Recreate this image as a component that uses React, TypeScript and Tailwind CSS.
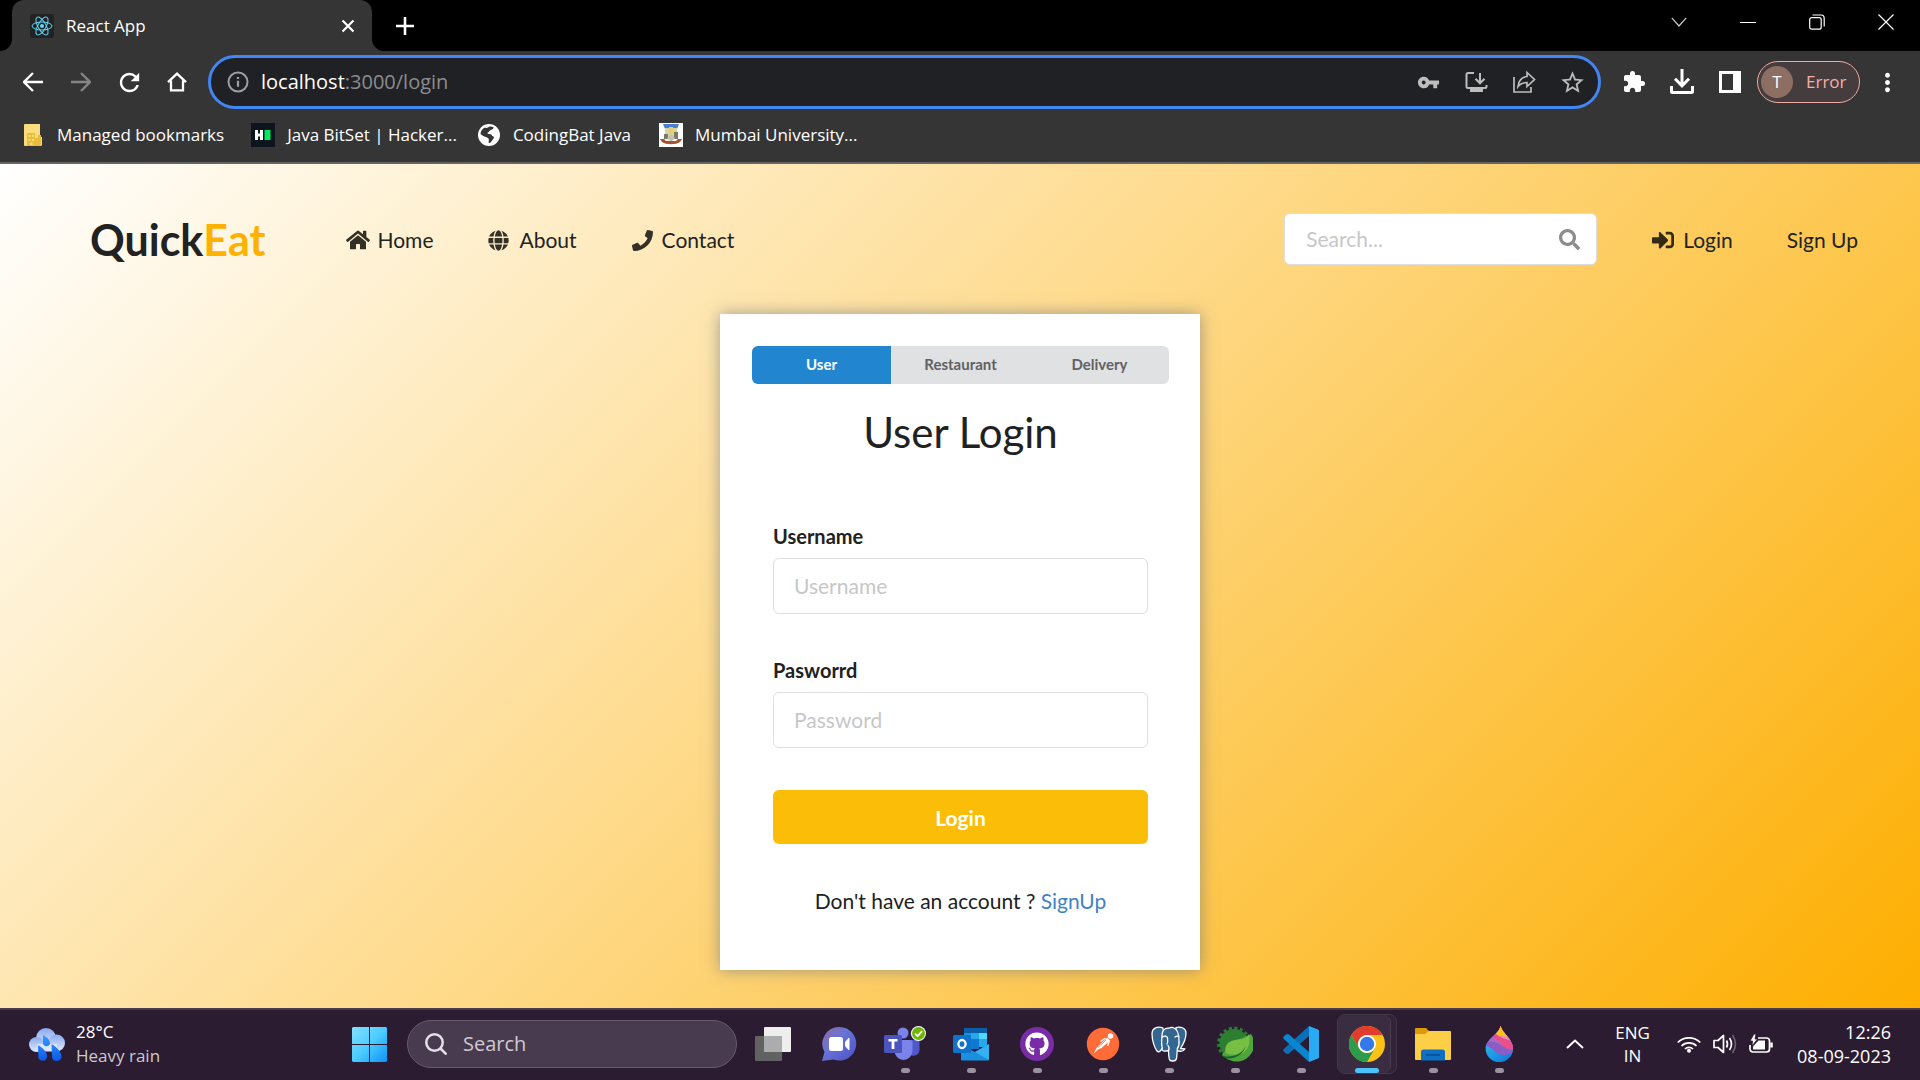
import type { ReactNode } from "react";
import { FaHome, FaGlobe, FaPhone, FaSearch, FaSignInAlt, FaGithub } from "react-icons/fa";
import { MdVpnKey, MdStarOutline, MdExtension, MdMoreVert, MdRefresh } from "react-icons/md";

function ReactLogo() {
  return (
    <svg viewBox="0 0 24 24" className="size-6 shrink-0">
      <rect width="24" height="24" rx="2" fill="#222" />
      <g fill="none" stroke="#61dafb" strokeWidth="1">
        <ellipse cx="12" cy="12" rx="10" ry="4" />
        <ellipse cx="12" cy="12" rx="10" ry="4" transform="rotate(60 12 12)" />
        <ellipse cx="12" cy="12" rx="10" ry="4" transform="rotate(120 12 12)" />
      </g>
      <circle cx="12" cy="12" r="2" fill="#61dafb" />
    </svg>
  );
}

function TabStrip() {
  return (
    <header className="flex h-[51px] items-stretch bg-black text-white">
      <svg viewBox="0 0 12 12" className="size-3 shrink-0 self-end">
        <path d="M12 0v12H0A12 12 0 0 0 12 0z" fill="#353535" />
      </svg>
      <div className="flex w-[360px] items-center rounded-t-xl bg-[#353535] pr-3 pl-[18px]">
        <ReactLogo />
        <span className="ml-3 flex-1 text-[17px]">React App</span>
        <button aria-label="Close tab" className="flex size-6 items-center justify-center">
          <svg viewBox="0 0 14 14" className="size-[14px]" stroke="#fff" strokeWidth="2.2">
            <path d="M1.5 1.5l11 11M12.5 1.5l-11 11" />
          </svg>
        </button>
      </div>
      <svg viewBox="0 0 12 12" className="size-3 shrink-0 self-end">
        <path d="M0 0v12h12A12 12 0 0 1 0 0z" fill="#353535" />
      </svg>
      <button aria-label="New tab" className="ml-2 flex w-[26px] items-center justify-center">
        <svg viewBox="0 0 18 18" className="size-[18px]" stroke="#fff" strokeWidth="2.6">
          <path d="M9 0v18M0 9h18" />
        </svg>
      </button>
      <div className="ml-auto flex h-11 items-center">
        <button aria-label="Search tabs" className="flex w-[68px] justify-center">
          <svg viewBox="0 0 16 10" className="h-[10px] w-4" fill="none" stroke="#ccc" strokeWidth="1.2">
            <path d="M.8.8L8 9 15.200.8" />
          </svg>
        </button>
        <button aria-label="Minimize" className="flex w-[69px] justify-center">
          <span className="h-px w-4 bg-white" />
        </button>
        <button aria-label="Restore" className="flex w-[69px] justify-center">
          <svg viewBox="0 0 16 16" className="size-4" fill="none" stroke="#fff" strokeWidth="1.2">
            <rect x=".7" y="3.700" width="11.500" height="11.500" rx="2" />
            <path d="M3.500 1h8.500a3 3 0 0 1 3.200 3v8.500" />
          </svg>
        </button>
        <button aria-label="Close window" className="flex w-[69px] justify-center">
          <svg viewBox="0 0 16 16" className="size-4" stroke="#fff" strokeWidth="1.2">
            <path d="M.5.5l15 15M15.500.5l-15 15" />
          </svg>
        </button>
      </div>
    </header>
  );
}

function ToolButton({ label, children }: { label: string; children: ReactNode }) {
  return (
    <button aria-label={label} className="flex h-12 w-12 items-center justify-center">
      {children}
    </button>
  );
}

function Toolbar() {
  return (
    <div className="flex h-[62px] items-center bg-[#353535] pr-[17px] pl-[9px] text-white">
      <ToolButton label="Back">
        <svg viewBox="0 0 20 20" className="size-5" fill="none" stroke="#fff" strokeWidth="2.300">
          <path d="M20 10H2M10 1l-9 9 9 9" />
        </svg>
      </ToolButton>
      <ToolButton label="Forward">
        <svg viewBox="0 0 20 20" className="size-5" fill="none" stroke="#868686" strokeWidth="2.300">
          <path d="M0 10h18M10 1l9 9-9 9" />
        </svg>
      </ToolButton>
      <ToolButton label="Reload">
        <MdRefresh className="size-[29px]" />
      </ToolButton>
      <ToolButton label="Home">
        <svg viewBox="0 0 20 20" className="size-5" fill="none" stroke="#fff" strokeWidth="2.300">
          <path d="M1 10.200L10 1.600l9 8.600M4 8.500v9.800h12V8.500" />
        </svg>
      </ToolButton>
      <div className="ml-[7px] flex h-[54px] flex-1 items-center rounded-full border-3 border-[#4285f4] bg-[#202124] pr-[2px] pl-4 text-[#bdbdbd]">
        <svg viewBox="0 0 22 22" className="size-[22px] shrink-0" fill="none" stroke="#9aa0a6" strokeWidth="2">
          <circle cx="11" cy="11" r="9.500" />
          <path d="M11 9.800v6M11 6v2" strokeWidth="2.200" />
        </svg>
        <p className="ml-3 flex-1 text-[20px] text-[#8b8d90]">
          <span className="text-white">localhost</span>:3000/login
        </p>
        <ToolButton label="Passwords">
          <MdVpnKey className="size-[23px]" />
        </ToolButton>
        <ToolButton label="Install app">
          <svg viewBox="0 0 24 24" className="size-6" fill="none" stroke="currentColor" strokeWidth="2">
            <path d="M10 3H4a1.500 1.500 0 0 0-1.500 1.500v12A1.500 1.500 0 0 0 4 18h17a1.500 1.500 0 0 0 1.500-1.500V15" />
            <path d="M16 3v10M11.500 8.800l4.500 4.500 4.500-4.500" />
            <path d="M6 19h13v3H6z" fill="currentColor" stroke="none" />
          </svg>
        </ToolButton>
        <ToolButton label="Share">
          <svg viewBox="0 0 24 24" className="size-6" fill="none" stroke="currentColor" strokeWidth="1.700">
            <path d="M2 7v15h17v-5" />
            <path d="M15 2.500l7.500 7L15 16.500v-4c-4 0-6.500.8-9 4 .6-5.500 3.500-9.300 9-10z" />
          </svg>
        </ToolButton>
        <ToolButton label="Bookmark this tab">
          <MdStarOutline className="size-[27px]" />
        </ToolButton>
      </div>
      <div className="ml-[9px] flex items-center">
        <ToolButton label="Extensions">
          <MdExtension className="size-6" />
        </ToolButton>
        <ToolButton label="Downloads">
          <svg viewBox="0 0 24 26" className="h-[26px] w-6" fill="none" stroke="#fff" strokeWidth="3">
            <path d="M12 0v16M5 9.800l7 7 7-7" />
            <path d="M1.500 17v5.500a1 1 0 0 0 1 1h19a1 1 0 0 0 1-1V17" />
          </svg>
        </ToolButton>
        <ToolButton label="Side panel">
          <svg viewBox="0 0 22 22" className="size-[22px]">
            <path d="M0 0h22v22H0zM3 3v16h11V3z" fill="#fff" fillRule="evenodd" />
          </svg>
        </ToolButton>
      </div>
      <button className="ml-[3px] flex h-[42px] w-[103px] items-center rounded-full border border-[#f2a9a2] bg-[#453d3d] pl-[3px] text-[17px] text-[#f6aea5]">
        <span className="flex size-8 items-center justify-center rounded-full bg-[#8d6e63] text-white">T</span>
        <span className="ml-[13px]">Error</span>
      </button>
      <button aria-label="Menu" className="ml-[11px] flex w-8 justify-center">
        <MdMoreVert className="size-[29px]" />
      </button>
    </div>
  );
}

function Bookmarks() {
  return (
    <nav className="flex h-[51px] items-center border-b-2 border-[#656565] bg-[#353535] pb-[6px] pl-6 text-[17px] text-white">
      <a href="#managed" className="flex items-center gap-[15px]">
        <svg viewBox="0 0 18 22" className="h-[22px] w-[18px]">
          <path d="M1 0h15v13h2v7.500A1.500 1.500 0 0 1 16.500 22H1a1 1 0 0 1-1-1V1a1 1 0 0 1 1-1z" fill="#fbdc7c" />
          <path d="M3 9h8v5h3v-3h3v9.500a1.500 1.500 0 0 1-1.500 1.500H3z" fill="#e9bd3c" />
          <path d="M4.500 11h2v2h-2zM8 11h2v2H8zM4.500 15h2v2h-2zM8 15h2v2H8zM6 18.500h2.500V21H6z" fill="#fbdc7c" />
        </svg>
        Managed bookmarks
      </a>
      <a href="#bitset" className="ml-[27px] flex items-center gap-3">
        <svg viewBox="0 0 24 24" className="size-6">
          <rect width="24" height="24" fill="#0e141e" />
          <path d="M4 7h3v3.500h2V7h3v10H9v-3.500H7V17H4z" fill="#fff" />
          <path d="M13.500 7h6v10h-6z" fill="#00ea64" />
        </svg>
        Java BitSet | Hacker...
      </a>
      <a href="#codingbat" className="ml-[21px] flex items-center gap-[13px]">
        <svg viewBox="0 0 22 22" className="size-[22px]">
          <circle cx="11" cy="11" r="11" fill="#fff" />
          <path d="M15.500 3.200c.3 2-2 2.300-3.500 3.200-1.300.9-.9 1.800-2.300 2.100-.8 1.500 1 1.500 3 1.700 1.200.2.800 1.800 2.300 2 1.500.3 1 2.300-.2 3.200-1.200.9-1.300 3.300-3.800 3.600-1-1 .3-2.700-.2-4-.6-1.600-3.600-2-5-2.800C4 11.200 2.500 10 2.500 10c.2-3.500 2-5.300 4.500-6.600C8.500 5 10 3.200 11.500 2.600c1.500-.3 3 0 4 .6z" fill="#353535" />
        </svg>
        CodingBat Java
      </a>
      <a href="#mumbai" className="ml-[28px] flex items-center gap-3">
        <svg viewBox="0 0 24 24" className="size-6">
          <rect width="24" height="24" fill="#fff" />
          <path d="M4 1h16l-2 5H6z" fill="#4b7fd0" />
          <path d="M6 5h12v11H6z" fill="#d8d3a4" />
          <path d="M10 4h4v7h-4z" fill="#e6cf6a" />
          <path d="M5 11h4v5H5zM15 9h4v7h-4z" fill="#7a7a62" />
          <path d="M8 15l4-4 4 4-4 4z" fill="#c4c1b4" />
          <path d="M1 16h4l2 2h10l2-2h4l-2 3c-4 3-14 3-18 0z" fill="#a8502f" />
        </svg>
        Mumbai University...
      </a>
    </nav>
  );
}

function SiteHeader() {
  return (
    <div className="flex h-[150px] items-center pr-[62px] pl-[90px] text-[21px] text-[#222]">
      <a href="#top" className="text-[43px] leading-none font-bold">
        Quick<span className="text-[#ffb100]">Eat</span>
      </a>
      <nav className="ml-20 flex items-center gap-[55px] pt-[2px]">
        <a href="#home" className="flex items-center gap-2">
          <FaHome className="size-6 text-[#333026]" />
          Home
        </a>
        <a href="#about" className="flex items-center gap-[10px]">
          <FaGlobe className="size-[21px] text-[#333026]" />
          About
        </a>
        <a href="#contact" className="flex items-center gap-[9px]">
          <FaPhone className="size-[21px] text-[#333026]" />
          Contact
        </a>
      </nav>
      <label className="ml-auto flex h-[52px] w-[313px] items-center rounded-md border border-[#dedede] bg-white px-[21px] pr-4">
        <input type="search" placeholder="Search..." aria-label="Search" className="min-w-0 flex-1 outline-none placeholder:text-[#c7c7c7]" />
        <FaSearch className="size-[21px] text-[#8c8c8c]" />
      </label>
      <a href="#login" className="ml-[55px] flex items-center gap-[9px] pt-[2px]">
        <FaSignInAlt className="size-[22px] text-[#332a17]" />
        Login
      </a>
      <a href="#signup" className="ml-[54px] pt-[2px]">
        Sign Up
      </a>
    </div>
  );
}

function Field({ id, label, placeholder, type }: { id: string; label: string; placeholder: string; type: string }) {
  return (
    <div className="flex flex-col">
      <label htmlFor={id} className="mb-2 text-[20px] leading-7 font-bold text-[#212121]">
        {label}
      </label>
      <input
        id={id}
        type={type}
        placeholder={placeholder}
        className="h-14 rounded-md border border-[#dedede] px-5 pb-[2px] text-[21px] outline-none placeholder:text-[#c7c7c7]"
      />
    </div>
  );
}

function LoginCard() {
  return (
    <section className="mx-auto mb-[38px] flex w-[480px] flex-col bg-white pt-8 pr-[31px] pb-[54px] pl-8 shadow-[0_0_15px_rgba(128,128,128,0.75)]">
      <div className="grid h-[38px] grid-cols-3 overflow-hidden rounded-md bg-[#e0e1e2] text-[15px] font-bold text-[#606162]">
        <button className="bg-[#2185d0] pb-[2px] text-white">User</button>
        <button className="pb-[2px]">Restaurant</button>
        <button className="pb-[2px]">Delivery</button>
      </div>
      <h1 className="mt-5 text-center text-[42px] leading-[56px] text-[#212121]">User Login</h1>
      <form className="mx-[21px] mt-[62px] flex flex-col gap-[42px]">
        <Field id="username" label="Username" placeholder="Username" type="text" />
        <Field id="password" label="Pasworrd" placeholder="Password" type="password" />
        <button type="button" className="h-[54px] rounded-md bg-[#fbbd08] pt-[2px] text-[21px] font-bold text-white">
          Login
        </button>
      </form>
      <p className="mt-[42px] text-center text-[21px] leading-[30px] text-[#212121]">
        Don't have an account ?{" "}
        <a href="#signup" className="text-[#4183c4]">
          SignUp
        </a>
      </p>
    </section>
  );
}

function Weather() {
  return (
    <svg viewBox="0 0 36 36" className="size-9 shrink-0">
      <defs>
        <linearGradient id="cloud" x1="0" y1="0" x2="0" y2="1">
          <stop offset="0" stopColor="#8aa9ee" />
          <stop offset="1" stopColor="#e1ebfd" />
        </linearGradient>
        <linearGradient id="drop" x1="0" y1="0" x2="0" y2="1">
          <stop offset="0" stopColor="#3a9cff" />
          <stop offset="1" stopColor="#0a57e8" />
        </linearGradient>
      </defs>
      <circle cx="17" cy="12" r="10" fill="url(#cloud)" />
      <circle cx="7.500" cy="18.500" r="7.500" fill="url(#cloud)" />
      <circle cx="27.500" cy="17" r="8.500" fill="url(#cloud)" />
      <path d="M8 18h20v7.500H8z" fill="#dbe7fd" />
      <path d="M14 9c4.500 2.500 7 5 7 8.500a3.600 3.600 0 0 1-7 0zM9 19c6 4 9 7 9 11.500a4.300 4.300 0 0 1-8.700 0zM22.500 18c6.500 4 10 8.500 10 13a4.800 4.800 0 0 1-9.500 0z" fill="url(#drop)" />
    </svg>
  );
}

function WindowsLogo() {
  return (
    <svg viewBox="0 0 35 35" className="size-[35px]">
      <defs>
        <linearGradient id="win" x1="0" y1="0" x2="35" y2="35" gradientUnits="userSpaceOnUse">
          <stop offset="0" stopColor="#83e0ff" />
          <stop offset=".5" stopColor="#4cccff" />
          <stop offset="1" stopColor="#0c93f5" />
        </linearGradient>
      </defs>
      <path d="M1 0h16v17H0V1zM18 0h16l1 1v16H18zM0 18h17v17H1l-1-1zM18 18h17v16l-1 1H18z" fill="url(#win)" />
    </svg>
  );
}

const icon = "size-9";

const TaskViewIcon = () => (
  <svg viewBox="0 0 36 36" className={icon}>
    <rect x="9" y="1" width="27" height="25" rx="1" fill="#eee" />
    <rect y="10" width="27" height="25" rx="1" fill="#626262" />
    <path d="M9 10h18v16H9z" fill="#acacac" />
  </svg>
);

const ChatIcon = () => (
  <svg viewBox="0 0 36 36" className={icon}>
    <defs>
      <linearGradient id="chat" x1="0" y1="0" x2="1" y2="1">
        <stop offset="0" stopColor="#97659f" />
        <stop offset=".4" stopColor="#6975d6" />
        <stop offset="1" stopColor="#4c50c8" />
      </linearGradient>
    </defs>
    <path d="M18.500 1a16.800 16.800 0 1 1-6 32.500L1 35l2.500-9A16.800 16.800 0 0 1 18.500 1z" fill="url(#chat)" />
    <rect x="8" y="11" width="14" height="14" rx="2.500" fill="#fff" />
    <path d="M24 16l3.500-4h1v12h-1L24 20z" fill="#fff" />
  </svg>
);

const TeamsIcon = () => (
  <svg viewBox="0 0 42 36" className="h-9 w-[42px]">
    <circle cx="19" cy="7" r="5.500" fill="#7b83eb" />
    <circle cx="31" cy="8" r="4.500" fill="#5059c9" />
    <path d="M25 14h9a1.500 1.500 0 0 1 1.500 1.500V24a6 6 0 0 1-9 5z" fill="#5059c9" />
    <path d="M10 14h16.500a2 2 0 0 1 2 2v9a9 9 0 0 1-18 0z" fill="#7b83eb" />
    <rect y="9" width="18" height="18" rx="1.500" fill="#4b53bc" />
    <path d="M4.500 13h9v2.500h-3.100V23H7.600v-7.500H4.500z" fill="#fff" />
    <circle cx="34.500" cy="7.500" r="7.500" fill="#fff" />
    <circle cx="34.500" cy="7.500" r="6.500" fill="#6bb700" />
    <path d="M31 7.500l2.500 2.700 4.600-5" fill="none" stroke="#fff" strokeWidth="1.800" />
  </svg>
);

const OutlookIcon = () => (
  <svg viewBox="0 0 36 36" className={icon}>
    <path d="M11 2h23v16H11z" fill="#1490df" />
    <path d="M11 2h23v5H11z" fill="#0a5ea8" />
    <path d="M26 7h8v6h-8z" fill="#50d9ff" />
    <path d="M18 7h8v6h-8z" fill="#28a8ea" />
    <path d="M18 13h8v10h-8z" fill="#0f78d0" />
    <path d="M26 13h8v8h-8z" fill="#28a8ea" />
    <path d="M8 19l14 7 14-8v15.500a1 1 0 0 1-1 1H9a1 1 0 0 1-1-1z" fill="#1b8fdf" />
    <path d="M22 26l14-8v16z" fill="#35b0f0" />
    <rect y="9" width="18" height="18" rx="1.500" fill="#0f73cc" />
    <ellipse cx="9" cy="18" rx="3.600" ry="4" fill="none" stroke="#fff" strokeWidth="2.300" />
  </svg>
);

const GithubIcon = () => (
  <span className="flex size-[34px] items-center justify-center rounded-full bg-[#7a2ba6]">
    <FaGithub className="size-6 text-white" />
  </span>
);

const PostmanIcon = () => (
  <svg viewBox="0 0 36 36" className={icon}>
    <circle cx="18" cy="18" r="16.200" fill="#ff6c37" />
    <circle cx="25.500" cy="10" r="2.700" fill="#fff" />
    <path d="M22.500 11.500l2.500 3-8.500 7.500-3.500 1.500-4.500 4.300 3.300-6.300 3.500-3.500z" fill="#fff" />
    <path d="M24.500 14.500l-2 5.500M15.500 15.500l5-3.500" stroke="#fff" strokeWidth="1.300" />
    <path d="M13 21.500l8-7.500" stroke="#ff6c37" strokeWidth=".8" />
  </svg>
);

const PostgresIcon = () => (
  <svg viewBox="0 0 36 36" className={icon} fill="#336791" stroke="#fff" strokeWidth="1.300" strokeLinejoin="round" strokeLinecap="round">
    <path d="M25 1.500c5-1.500 10 1 10 5.500 0 5-2.500 11-5.500 15.500l4.500.3c-1.200 2.200-4.200 2.800-6.500 2.200-2 .2-3-1-3-2.500z" />
    <path d="M12 2C7 0 1 1.500 1 8c0 6 2.500 14 5 17 1.500 1.500 3 .5 4.500-1.500l3-4z" />
    <path d="M18 2.200C13.500 1.500 11 5 11 9c0 4-1 8 0 11.500 1 3-1.500 3.500 1.500 4.500 2 .6 4.500-.5 5-.5 0 3 .3 6 .8 8.500.7 2.800 6.500 2.700 7.200-.5.6-3 .5-7 .8-10 2-2.500 2-5 1.700-8C28 8 27 3 22 1.500c-1.500-.4-3 0-4 .7z" />
    <path d="M17.500 24.500c1-1.500.5-3.500-.5-5M11.500 11c2-1.500 4.500-1 5 1 .3 2 .7 4-.5 6M24 11c1.500-1.200 3-1 4-.3" fill="none" />
  </svg>
);

const SpringIcon = () => (
  <svg viewBox="0 0 36 36" className={icon}>
    <circle cx="17" cy="17.500" r="14.500" fill="#2d7d32" />
    <circle cx="17" cy="17.500" r="15.200" fill="none" stroke="#2d7d32" strokeWidth="3.500" strokeDasharray="3 2.500" />
    <path d="M34 8a17 17 0 1 1-29 20L20 14z" fill="#4da53c" />
    <path d="M8.500 27C7 16 15 14 22 13.500c5-.4 8-2 10-5.500 2 11-2 20-12 20.500-4 .2-8 .3-11.500-1.500z" fill="#77c043" />
    <path d="M6 30c10 2 19-2 23-10-3 9-12 14-21 12z" fill="#17652a" />
  </svg>
);

const VsCodeIcon = () => (
  <svg viewBox="0 0 36 36" className={icon}>
    <path d="M26 0v10L6 27.500q-1.500 1-3 0L.8 25.500q-1.200-1.300 0-2.600z" fill="#0b6fb8" />
    <path d="M26 36V26L6 8.500q-1.500-1-3 0L.8 10.500q-1.200 1.300 0 2.600z" fill="#0a86d1" />
    <path d="M26 0l9 3.500q1 .5 1 1.500v26q0 1-1 1.500L26 36z" fill="#2aaaf2" />
  </svg>
);

const ChromeIcon = () => (
  <svg viewBox="0 0 36 36" className={icon}>
    <circle cx="18" cy="18" r="18" fill="#fbc116" />
    <path d="M2.400 9A18 18 0 0 1 33.600 9H18a9 9 0 0 0-7.800 13.500z" fill="#e33b2e" />
    <path d="M2.400 9A18 18 0 0 0 18 36l7.800-13.500a9 9 0 0 1-15.600 0z" fill="#2a9c4b" />
    <circle cx="18" cy="18" r="9" fill="#fff" />
    <circle cx="18" cy="18" r="7.200" fill="#3478e8" />
  </svg>
);

const ExplorerIcon = () => (
  <svg viewBox="0 0 36 36" className={icon}>
    <path d="M0 3a1 1 0 0 1 1-1h10l4 4v6H0z" fill="#dd9a06" />
    <path d="M0 8h10l4-3h21a1 1 0 0 1 1 1v27a1 1 0 0 1-1 1H1a1 1 0 0 1-1-1z" fill="#fdcf47" />
    <path d="M6 34.500V26a2.500 2.500 0 0 1 2.500-2.500h19A2.500 2.500 0 0 1 30 26v8.500z" fill="#0f6fc2" />
    <path d="M11 29h14" stroke="#084b8d" strokeWidth="1.500" />
  </svg>
);

const PaintIcon = () => (
  <svg viewBox="0 0 36 36" className={icon}>
    <defs>
      <clipPath id="paintDrop">
        <path d="M19.500 0c1.500 7 12.500 13 12.500 22.500a13.700 13.700 0 0 1-27.400 0C4.600 13 18 9 19.500 0z" />
      </clipPath>
      <linearGradient id="paintBlue" x1="0" y1="0" x2="1" y2="1">
        <stop offset="0" stopColor="#39d0f7" />
        <stop offset="1" stopColor="#0a6fd6" />
      </linearGradient>
    </defs>
    <g clipPath="url(#paintDrop)">
      <path d="M0 0h36v36H0z" fill="url(#paintBlue)" />
      <path d="M0 20c9-2 12 5 18 8 5 2.500 9 0 18-3V0H0z" fill="#8a5cc4" />
      <path d="M0 17c9-3 15-1 20 2 6 3.500 8 6 16 4V0H0z" fill="#a76bd0" />
      <path d="M0 12c12-3 17 2 21 7 4 4 8 5 15 3V0H0z" fill="#e8508a" />
      <path d="M0 13c9 0 12-3 15-5 4 4 12 6 21 8V0H0z" fill="#f08bb0" />
      <path d="M14 6c2 4 7 5 14 4V0H14z" fill="#fbc60c" />
    </g>
  </svg>
);

const apps: { name: string; glyph: () => ReactNode; running: boolean }[] = [
  { name: "Task view", glyph: TaskViewIcon, running: false },
  { name: "Chat", glyph: ChatIcon, running: false },
  { name: "Teams", glyph: TeamsIcon, running: true },
  { name: "Outlook", glyph: OutlookIcon, running: true },
  { name: "GitHub Desktop", glyph: GithubIcon, running: true },
  { name: "Postman", glyph: PostmanIcon, running: true },
  { name: "pgAdmin", glyph: PostgresIcon, running: true },
  { name: "Spring Tools", glyph: SpringIcon, running: true },
  { name: "Visual Studio Code", glyph: VsCodeIcon, running: true },
  { name: "Chrome", glyph: ChromeIcon, running: true },
  { name: "File Explorer", glyph: ExplorerIcon, running: true },
  { name: "Paint", glyph: PaintIcon, running: true },
];

function Taskbar() {
  return (
    <footer className="flex h-[72px] items-center border-t-2 border-[#493d4c] bg-[#2b1c32] pb-[2px] text-[17px] text-white">
      <button className="flex w-[352px] items-center gap-[11px] pl-[29px] text-left leading-6">
        <Weather />
        <span>
          28°C
          <span className="block text-[#cdc8cf]">Heavy rain</span>
        </span>
      </button>
      <button aria-label="Start">
        <WindowsLogo />
      </button>
      <label className="ml-5 flex h-12 w-[330px] items-center rounded-full border border-[#65596a] bg-[#493b4f] pl-[17px]">
        <svg viewBox="0 0 22 22" className="size-[22px] shrink-0" fill="none" stroke="#e4e0e5" strokeWidth="2.500">
          <circle cx="9.500" cy="9.500" r="8.200" />
          <path d="M15.500 15.500l6 6" />
        </svg>
        <input type="search" placeholder="Search" aria-label="Search Windows" className="ml-4 min-w-0 flex-1 text-[20px] outline-none placeholder:text-[#d0cad2]" />
      </label>
      <div className="ml-[3px] flex">
        {apps.map(({ name, glyph: Glyph, running }) =>
          name === "Chrome" ? (
            <button key={name} aria-label={name} className="mx-[3px] flex h-[60px] w-[60px] rounded-lg border border-[#44374a] bg-[#32233a]">
              <span className="flex h-full w-[53px] flex-col items-end gap-[6px] rounded-lg border-r border-[#4a3d50] bg-[#3a2c41] pt-[11px] pr-[5px]">
                <Glyph />
                <span className="mr-[6px] h-[5px] w-6 rounded-full bg-[#4cc2ff]" />
              </span>
            </button>
          ) : (
            <button key={name} aria-label={name} className="flex h-[60px] w-[66px] flex-col items-center gap-[6px] pt-3">
              <span className="flex h-9 items-center">
                <Glyph />
              </span>
              {running && <span className="h-[5px] w-[9px] rounded-full bg-[#9a929e]" />}
            </button>
          ),
        )}
      </div>
      <div className="ml-auto flex items-center pr-[29px]">
        <button aria-label="Show hidden icons">
          <svg viewBox="0 0 18 10" className="h-[10px] w-[18px]" fill="none" stroke="#fff" strokeWidth="2">
            <path d="M1 9l8-7.500L17 9" />
          </svg>
        </button>
        <button className="ml-7 w-[41px] text-center leading-[23px]">
          ENG
          <span className="block">IN</span>
        </button>
        <button aria-label="Network, volume and battery" className="ml-6 flex items-center gap-3">
          <svg viewBox="0 0 24 18" className="h-[18px] w-6" fill="none" stroke="#fff" strokeWidth="1.700">
            <path d="M.7 7.500a16 16 0 0 1 22.600 0M4.500 11a10.700 10.700 0 0 1 15 0M8 14a5.800 5.800 0 0 1 8 0" />
            <circle cx="12" cy="15.700" r="2" fill="#fff" stroke="none" />
          </svg>
          <svg viewBox="0 0 24 20" className="h-5 w-6" fill="none" stroke="#fff" strokeWidth="1.700" strokeLinejoin="round">
            <path d="M1 6.500h4L10.500 1.500v17L5 13.500H1z" />
            <path d="M13.500 6.500q2 3.500 0 7M16.500 4q4 6 0 12" />
            <path d="M19.500 1q6 9 0 18" stroke="#6b5f70" />
          </svg>
          <svg viewBox="0 0 24 20" className="h-5 w-6" fill="none" stroke="#fff" strokeWidth="1.700">
            <path d="M9 4h8.500a3 3 0 0 1 3 3v8a3 3 0 0 1-3 3H4a3 3 0 0 1-3-3v-4" />
            <path d="M9.500 6.500H16v9H4v-3z" fill="#fff" stroke="none" />
            <path d="M22.500 8.500v5" strokeWidth="2.500" />
            <path d="M5 0L1 7h2.500L3 12l5.500-7H6l1-5z" fill="#fff" stroke="#2b1c32" strokeWidth=".8" />
          </svg>
        </button>
        <button className="ml-6 text-right text-[18px] leading-6 whitespace-nowrap">
          12:26
          <span className="block">08-09-2023</span>
        </button>
      </div>
    </footer>
  );
}

export default function App() {
  return (
    <div className="flex min-h-screen flex-col font-['Open_Sans',sans-serif]">
      <TabStrip />
      <Toolbar />
      <Bookmarks />
      <main className="flex-1 bg-[linear-gradient(135deg,#ffffff,#fdae00)] font-['Lato',sans-serif]">
        <SiteHeader />
        <LoginCard />
      </main>
      <Taskbar />
    </div>
  );
}
